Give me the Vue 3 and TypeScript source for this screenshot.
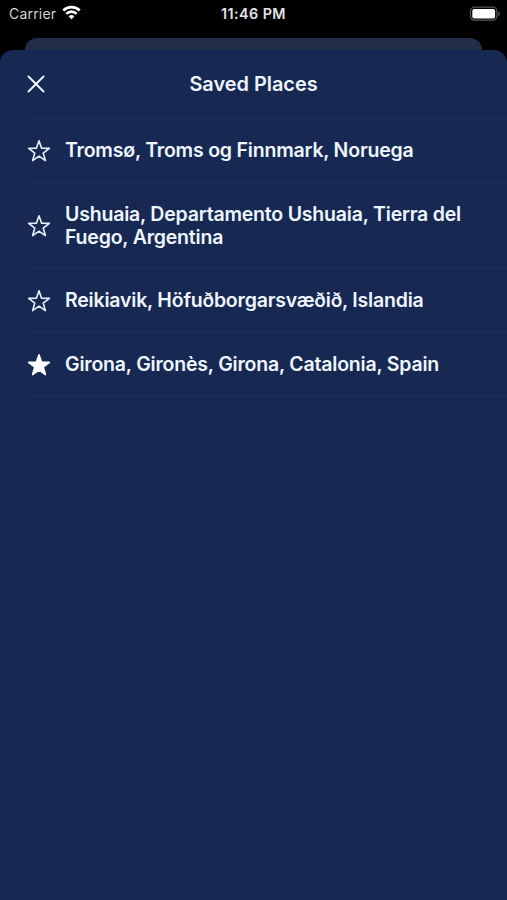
<script setup lang="ts">
interface Place {
  lines: string[]
  saved: boolean
}

const places: Place[] = [
  { lines: ['Tromsø, Troms og Finnmark, Noruega'], saved: false },
  { lines: ['Ushuaia, Departamento Ushuaia, Tierra del', 'Fuego, Argentina'], saved: false },
  { lines: ['Reikiavik, Höfuðborgarsvæðið, Islandia'], saved: false },
  { lines: ['Girona, Gironès, Girona, Catalonia, Spain'], saved: true },
]
</script>

<template>
  <div class="screen">
    <header class="status">
      <div class="carrier">
        <span>Carrier</span>
        <svg class="wifi" width="19" height="15" viewBox="0 0 19 15" fill="none" stroke="#fff" stroke-width="2.6">
          <path d="M1.3 5.5a11.7 11.7 0 0 1 16.4 0" />
          <path d="M4.3 8.8a7.4 7.4 0 0 1 10.4 0" />
          <path d="M9.5 14.2 6.7 11.4a4 4 0 0 1 5.6 0z" fill="#fff" stroke="none" />
        </svg>
      </div>
      <span class="time">11:46 PM</span>
      <svg class="battery" width="32" height="16" viewBox="0 0 32 16">
        <rect x="1.5" y="1.2" width="26.4" height="13" rx="4" fill="none" stroke="#58585a" stroke-width="1.2" />
        <rect x="3.3" y="3" width="22.8" height="9.4" rx="2" fill="#fff" />
        <path d="M29.4 5.2c1.8.6 1.8 4.4 0 5z" fill="#69696b" />
      </svg>
    </header>
    <div class="behind"></div>
    <main class="sheet">
      <div class="bar">
        <button class="close" type="button" aria-label="Close">
          <svg width="18" height="18" viewBox="0 0 18 18" fill="none" stroke="#f2f7ff" stroke-width="1.9" stroke-linecap="round">
            <path d="M1.5 1.5l15 15M16.5 1.5l-15 15" />
          </svg>
        </button>
        <h1>Saved Places</h1>
        <span></span>
      </div>
      <ul class="list">
        <li v-for="place in places" :key="place.lines[0]">
          <svg class="star" :class="{ filled: place.saved }" width="24" height="24" viewBox="0 0 24 24">
            <path d="M12 1.8 14.6 9.2 22.4 9.4 16.2 14.1 18.4 21.6 12 17.2 5.6 21.6 7.8 14.1 1.6 9.4 9.4 9.2Z" />
          </svg>
          <p :class="{ wrapped: place.lines.length > 1 }">
            <span v-for="line in place.lines" :key="line">{{ line }}</span>
          </p>
        </li>
      </ul>
    </main>
  </div>
</template>

<style>
body {
  margin: 0;
  background: #000;
}
</style>

<style scoped>
.screen {
  display: flex;
  flex-direction: column;
  height: 900px;
  overflow: hidden;
  background: #000;
  color: #eef6ff;
  font-family: Inter, "Liberation Sans", sans-serif;
}
.status {
  display: grid;
  grid-template-columns: 1fr auto 1fr;
  align-items: center;
  box-sizing: border-box;
  height: 38px;
  padding: 0 9px 11px;
  line-height: 18px;
}
.carrier {
  display: flex;
  align-items: center;
  gap: 5.5px;
  color: #d2d2d2;
  font-size: 14px;
  letter-spacing: 0.2px;
}
.wifi {
  margin-top: -2px;
}
.time {
  color: #e4e4e4;
  font-size: 14.3px;
  font-weight: 600;
  letter-spacing: 0.45px;
}
.battery {
  justify-self: end;
  margin-right: -3px;
}
.behind {
  height: 12px;
  margin: 0 25px;
  border-radius: 12px 12px 0 0;
  background: #222e48;
}
.sheet {
  flex: 1;
  border-radius: 13px 13px 0 0;
  background: #172852;
}
.bar {
  display: grid;
  grid-template-columns: 1fr auto 1fr;
  align-items: center;
  height: 68px;
}
.close {
  display: flex;
  width: 18px;
  margin-left: 27px;
  padding: 0;
  border: 0;
  background: none;
}
h1 {
  margin: 0;
  font-size: 19.9px;
  font-weight: 600;
  line-height: 24px;
}
.list {
  margin: 0 0 0 26px;
  padding: 0;
  border-top: 1px solid #1e2f59;
  list-style: none;
}
li {
  display: flex;
  align-items: center;
  box-sizing: border-box;
  min-height: 64px;
  padding: 19px 0 20px;
  border-bottom: 1px solid #1e2f59;
}
.star {
  flex: none;
  margin: 1px 14px -1px 1px;
  fill: none;
  stroke: #e6f1ff;
  stroke-width: 1.6;
  stroke-linejoin: round;
}
.filled {
  fill: #fff;
  stroke: #fff;
}
p {
  margin: 0;
  font-size: 19.5px;
  font-weight: 600;
  letter-spacing: -0.2px;
  line-height: 23px;
  white-space: nowrap;
}
.wrapped {
  margin: 1px 0 -1px;
}
p span {
  display: block;
}
</style>
